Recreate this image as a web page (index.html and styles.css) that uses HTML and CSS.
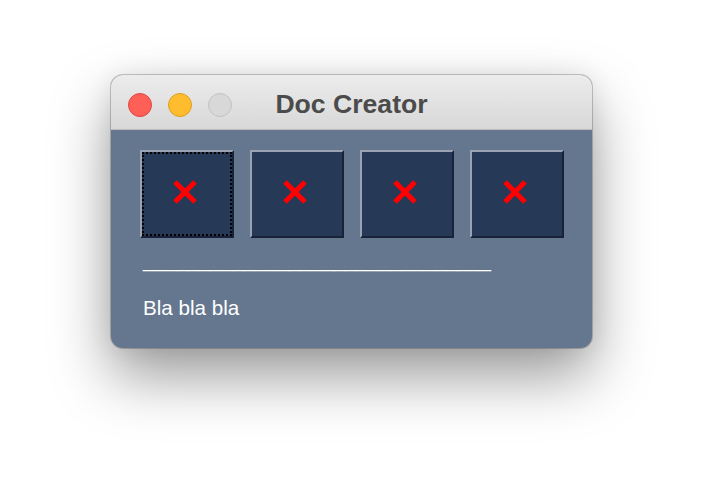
FILE: index.html
```html
<!DOCTYPE html>
<html>
<head>
<meta charset="utf-8">
<link rel="stylesheet" href="styles.css">
</head>
<body>
<div class="window">
  <div class="titlebar">
    <div class="lights">
      <span class="light red"></span>
      <span class="light yellow"></span>
      <span class="light gray"></span>
    </div>
    <div class="title">Doc Creator</div>
    <div></div>
  </div>
  <div class="content">
    <div class="buttons">
      <div class="btn focused"><svg class="x" width="24" height="24" viewBox="0 0 24 24"><path d="M2 2L22 22M22 2L2 22" stroke="#ff0000" stroke-width="5"/></svg></div>
      <div class="btn"><svg class="x" width="24" height="24" viewBox="0 0 24 24"><path d="M2 2L22 22M22 2L2 22" stroke="#ff0000" stroke-width="5"/></svg></div>
      <div class="btn"><svg class="x" width="24" height="24" viewBox="0 0 24 24"><path d="M2 2L22 22M22 2L2 22" stroke="#ff0000" stroke-width="5"/></svg></div>
      <div class="btn"><svg class="x" width="24" height="24" viewBox="0 0 24 24"><path d="M2 2L22 22M22 2L2 22" stroke="#ff0000" stroke-width="5"/></svg></div>
    </div>
    <div class="rule">_______________________________</div>
    <div class="label">Bla bla bla</div>
  </div>
</div>
</body>
</html>
```
FILE: styles.css
```css
html, body {
  margin: 0;
  background: #ffffff;
  font-family: "Liberation Sans", Arial, sans-serif;
}
body {
  min-height: 100vh;
  padding-top: 75px;
  box-sizing: border-box;
}
.window {
  margin: 0 0 0 111px;
  width: 481px;
  height: 273px;
  border-radius: 12px;
  overflow: hidden;
  background: #65778f;
  display: flex;
  flex-direction: column;
  box-shadow: 0 0 0 1px rgba(0, 0, 0, 0.2), 0 28px 60px rgba(0, 0, 0, 0.4), 0 0 24px rgba(0, 0, 0, 0.08);
}
.titlebar {
  height: 54px;
  flex: none;
  display: grid;
  grid-template-columns: 1fr auto 1fr;
  align-items: center;
  background: linear-gradient(#ececec, #d8d8d8);
  border-bottom: 1px solid #bdbdbd;
}
.lights {
  display: flex;
  gap: 16px;
  padding-left: 17px;
  margin-top: 4px;
}
.light {
  width: 24px;
  height: 24px;
  border-radius: 50%;
  box-sizing: border-box;
  border: 1px solid;
}
.red { background: #fe5f57; border-color: #e0443e; }
.yellow { background: #febc2e; border-color: #dca122; }
.gray { background: #d8d8d8; border-color: #c2c2c2; }
.title {
  font-size: 26.6px;
  font-weight: bold;
  color: #4b4b4b;
  line-height: 54px;
  margin-top: 2px;
}
.content {
  flex: 1;
  padding: 20px 0 0 29px;
}
.buttons {
  display: flex;
  gap: 16px;
}
.btn {
  position: relative;
  width: 94px;
  height: 88px;
  box-sizing: border-box;
  background: #263957;
  border-style: solid;
  border-width: 2px;
  border-color: #9aa3b3 #18233a #18233a #9aa3b3;
  display: flex;
  align-items: center;
  justify-content: center;
  padding: 0 4px 4px 0;
}
.btn.focused::after {
  content: "";
  position: absolute;
  inset: 0;
  border: 2px dotted #000;
}
.x { display: block; }
.rule {
  color: #ffffff;
  font-size: 20.2px;
  line-height: 23px;
  margin: 11px 0 0 3px;
  white-space: nowrap;
}
.label {
  color: #ffffff;
  font-size: 20.6px;
  line-height: 23px;
  margin: 24px 0 0 3px;
}
```
